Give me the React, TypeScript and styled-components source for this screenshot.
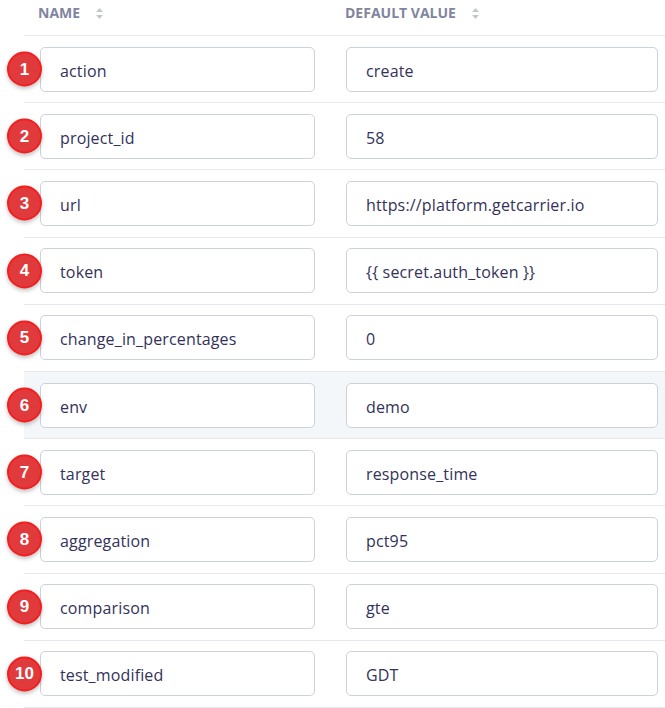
import React from "react";
import styled, { createGlobalStyle } from "styled-components";

const Global = createGlobalStyle`
  html, body { margin: 0; padding: 0; background: #ffffff; }
  body { font-family: "Open Sans", "Noto Sans", sans-serif; }
  * { box-sizing: border-box; }
`;

const Table = styled.div`
  margin-left: 24px;
  width: 641px;
  display: flex;
  flex-direction: column;
`;

const HeaderRow = styled.div`
  display: grid;
  grid-template-columns: 306px 1fr;
  height: 36px;
  border-bottom: 1px solid #e6e8ec;
`;

const HeaderCell = styled.div<{ $pad: number }>`
  display: flex;
  align-items: flex-start;
  gap: 16px;
  padding: 3px 0 0 ${(p) => p.$pad}px;
  font-size: 14px;
  font-weight: 700;
  color: #7f859f;
  text-transform: uppercase;
`;

const SortIcon = styled.svg`
  width: 7px;
  height: 11px;
  margin-top: 5px;
`;

const Row = styled.div<{ $active?: boolean }>`
  position: relative;
  display: grid;
  grid-template-columns: 306px 1fr;
  height: 67.2px;
  align-items: center;
  border-bottom: 1px solid #e6e8ec;
  background: ${(p) => (p.$active ? "#f4f7fa" : "transparent")};
`;

const Cell = styled.div<{ $pad: number; $right: number }>`
  padding: 0 ${(p) => p.$right}px 0 ${(p) => p.$pad}px;
`;

const Field = styled.div`
  height: 45px;
  border: 1px solid #cdd1d9;
  border-radius: 5px;
  background: #ffffff;
  display: flex;
  align-items: center;
  padding: 3px 0 0 19px;
  font-size: 16px;
  letter-spacing: 0.15px;
  color: #33325a;
  white-space: nowrap;
  overflow: hidden;
`;

const Badge = styled.div`
  position: absolute;
  left: -17px;
  top: 50%;
  transform: translateY(-50%);
  width: 35px;
  height: 35px;
  border-radius: 50%;
  background: #e13a3c;
  border: 2px solid #f51e1e;
  box-shadow: 0 2px 4px rgba(0, 0, 0, 0.25);
  color: #ffffff;
  font-family: "Liberation Sans", Arial, sans-serif;
  font-weight: 700;
  font-size: 17px;
  display: flex;
  align-items: center;
  justify-content: center;
  z-index: 1;
`;

const rows: [string, string][] = [
  ["action", "create"],
  ["project_id", "58"],
  ["url", "https://platform.getcarrier.io"],
  ["token", "{{ secret.auth_token }}"],
  ["change_in_percentages", "0"],
  ["env", "demo"],
  ["target", "response_time"],
  ["aggregation", "pct95"],
  ["comparison", "gte"],
  ["test_modified", "GDT"],
];

const Sort = () => (
  <SortIcon viewBox="0 0 7 11">
    <path d="M3.5 0 L7 4 L0 4 Z" fill="#c3c7cf" />
    <path d="M3.5 11 L7 7 L0 7 Z" fill="#c3c7cf" />
  </SortIcon>
);

export default function App() {
  return (
    <>
      <Global />
      <Table>
        <HeaderRow>
          <HeaderCell $pad={14}>
            <span>Name</span>
            <Sort />
          </HeaderCell>
          <HeaderCell $pad={15}>
            <span>Default value</span>
            <Sort />
          </HeaderCell>
        </HeaderRow>
        {rows.map(([name, value], i) => (
          <Row key={name} $active={i === 5}>
            <Badge>{i + 1}</Badge>
            <Cell $pad={16} $right={15}>
              <Field>{name}</Field>
            </Cell>
            <Cell $pad={16} $right={7}>
              <Field>{value}</Field>
            </Cell>
          </Row>
        ))}
      </Table>
    </>
  );
}
